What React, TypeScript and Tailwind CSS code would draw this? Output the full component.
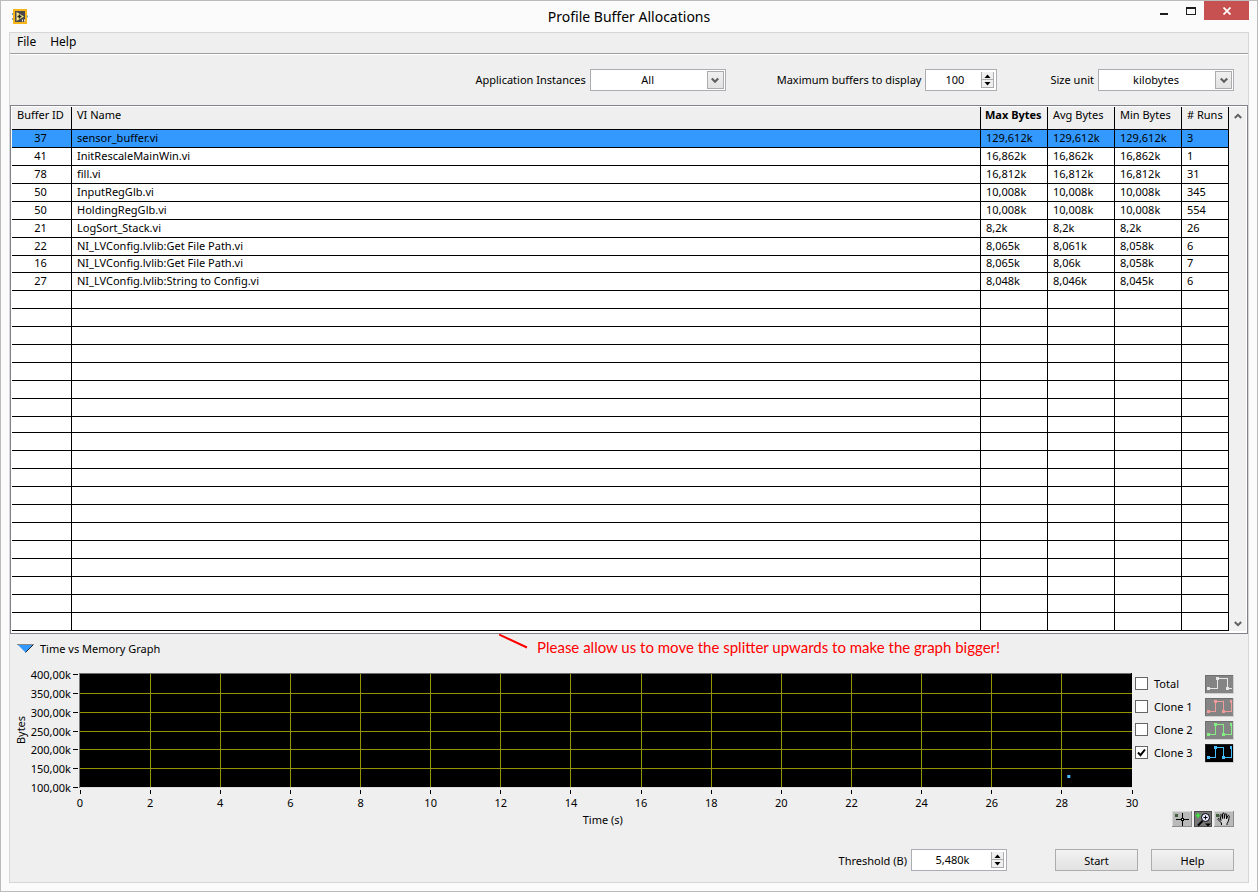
import { useState } from "react";

type Row = {
  id: string;
  name: string;
  max: string;
  avg: string;
  min: string;
  runs: string;
};

const rows: Row[] = [
  { id: "37", name: "sensor_buffer.vi", max: "129,612k", avg: "129,612k", min: "129,612k", runs: "3" },
  { id: "41", name: "InitRescaleMainWin.vi", max: "16,862k", avg: "16,862k", min: "16,862k", runs: "1" },
  { id: "78", name: "fill.vi", max: "16,812k", avg: "16,812k", min: "16,812k", runs: "31" },
  { id: "50", name: "InputRegGlb.vi", max: "10,008k", avg: "10,008k", min: "10,008k", runs: "345" },
  { id: "50", name: "HoldingRegGlb.vi", max: "10,008k", avg: "10,008k", min: "10,008k", runs: "554" },
  { id: "21", name: "LogSort_Stack.vi", max: "8,2k", avg: "8,2k", min: "8,2k", runs: "26" },
  { id: "22", name: "NI_LVConfig.lvlib:Get File Path.vi", max: "8,065k", avg: "8,061k", min: "8,058k", runs: "6" },
  { id: "16", name: "NI_LVConfig.lvlib:Get File Path.vi", max: "8,065k", avg: "8,06k", min: "8,058k", runs: "7" },
  { id: "27", name: "NI_LVConfig.lvlib:String to Config.vi", max: "8,048k", avg: "8,046k", min: "8,045k", runs: "6" },
];

const emptyRows = Array.from({ length: 19 }, (_, i) => i);

const yTicks = [
  { label: "400,00k", y: 1 },
  { label: "350,00k", y: 20 },
  { label: "300,00k", y: 39 },
  { label: "250,00k", y: 58 },
  { label: "200,00k", y: 76 },
  { label: "150,00k", y: 95 },
  { label: "100,00k", y: 114 },
];
const xTicks = Array.from({ length: 16 }, (_, i) => i * 2);

const plots = [
  { name: "Total", color: "#e6e6e6" },
  { name: "Clone 1", color: "#f09a9a" },
  { name: "Clone 2", color: "#84f084" },
  { name: "Clone 3", color: "#46beff" },
];

function AppIcon() {
  return (
    <svg width="16" height="15" viewBox="0 0 16 15" aria-hidden="true">
      <path d="M0 5h3M0 10h3M13 7.500h3" stroke="#6fa3c4" strokeWidth="2" />
      <rect x="2" y="1" width="12" height="13" fill="#4a4a4a" stroke="#f6b619" strokeWidth="2" />
      <path d="M4.500 3v9l7.500-4.500z" fill="#ffe98a" />
      <path d="M5.500 7.500h4M7.500 5.500v4" stroke="#222" strokeWidth="1.500" />
      <path d="M10 11.500h3" stroke="#eee" strokeDasharray="1 1" strokeWidth="2" />
    </svg>
  );
}

function TitleBar() {
  return (
    <header className="relative flex h-8 items-start justify-between pl-[11px] pr-2">
      <div className="pt-2">
        <AppIcon />
      </div>
      <h1 className="pointer-events-none absolute inset-x-0 top-1.5 text-center text-[14px] leading-5 font-normal">
        Profile Buffer Allocations
      </h1>
      <div className="flex h-[19px]">
        <button type="button" aria-label="Minimize" className="flex w-[26px] items-center justify-center">
          <svg width="8" height="9" viewBox="0 0 8 9" shapeRendering="crispEdges">
            <rect y="7" width="8" height="2" fill="#1e1e1e" />
          </svg>
        </button>
        <button type="button" aria-label="Maximize" className="flex w-[27px] items-center justify-center">
          <svg width="10" height="8" viewBox="0 0 10 8" shapeRendering="crispEdges">
            <path d="M0 0h10v8h-10zM1 2v5h8v-5z" fill="#1e1e1e" fillRule="evenodd" />
          </svg>
        </button>
        <button type="button" aria-label="Close" className="flex w-[45px] items-center justify-center bg-[#c75050]">
          <svg width="8" height="8" viewBox="0 0 8 8">
            <path d="M0.500 0.500l7 7M7.500 0.500l-7 7" stroke="#fff" strokeWidth="1.700" />
          </svg>
        </button>
      </div>
    </header>
  );
}

function SelectBox({ id, options }: { id: string; options: string[] }) {
  return (
    <div className="relative">
      <select
        id={id}
        className="block h-[22px] w-[136px] appearance-none border border-[#abadb3] bg-white pr-5 pb-0.5 text-center [text-align-last:center] outline-none"
      >
        {options.map((o) => (
          <option key={o}>{o}</option>
        ))}
      </select>
      <span className="pointer-events-none absolute top-0.5 right-0.5 flex h-[18px] w-[17px] items-center justify-center border border-[#acacac] bg-linear-to-b from-[#f0f0f0] to-[#e2e2e2]">
        <svg width="8" height="7" viewBox="0 0 8 7">
          <path d="M0.800 1.500L4 4.700L7.200 1.500" fill="none" stroke="#606060" strokeWidth="2.200" />
        </svg>
      </span>
    </div>
  );
}

function NumberBox({ id, value, wide }: { id: string; value: string; wide?: boolean }) {
  return (
    <div className={`flex h-[22px] border border-[#abadb3] bg-white p-0.5 ${wide ? "w-24" : "w-[72px]"}`}>
      <input
        id={id}
        type="text"
        defaultValue={value}
        className="h-4 min-w-0 flex-1 bg-transparent pb-0.5 text-center outline-none"
      />
      <div className="flex w-[13px] flex-col border border-t-0 border-[#acacac] bg-[#f0f0f0]">
        <button type="button" aria-label="Increase" className="flex flex-1 items-center justify-center">
          <svg width="7" height="4" viewBox="0 0 7 4">
            <path d="M0.500 4L3.500 0.500L6.500 4z" fill="#000" />
          </svg>
        </button>
        <button type="button" aria-label="Decrease" className="flex flex-1 items-center justify-center border-t border-[#acacac]">
          <svg width="7" height="4" viewBox="0 0 7 4">
            <path d="M0.500 0L3.500 3.500L6.500 0z" fill="#000" />
          </svg>
        </button>
      </div>
    </div>
  );
}

function BufferTable() {
  const [selected, setSelected] = useState(0);
  const th = "h-[23px] border-r border-b border-black bg-[#efefef] pl-[5px] align-top text-left font-normal leading-[15px]";
  const td = "border-r border-b border-black pl-[5px] pb-0.5 leading-[14px]";

  return (
    <div className="flex border border-[#82828c] bg-white px-px pt-px pb-0.5">
      <table className="w-full flex-1 table-fixed border-separate border-spacing-0 whitespace-nowrap">
        <colgroup>
          <col className="w-[60px]" />
          <col />
          <col className="w-[67px]" />
          <col className="w-[67px]" />
          <col className="w-[67px]" />
          <col className="w-[47px]" />
        </colgroup>
        <thead>
          <tr>
            <th className={th}>Buffer ID</th>
            <th className={th}>VI Name</th>
            <th className="h-[23px] border-r border-b border-black bg-[#efefef] pl-1 align-top text-left font-bold leading-[15px]">
              Max Bytes
            </th>
            <th className={th}>Avg Bytes</th>
            <th className={th}>Min Bytes</th>
            <th className={th}># Runs</th>
          </tr>
        </thead>
        <tbody>
          {rows.map((r, i) => (
            <tr
              key={i}
              onClick={() => setSelected(i)}
              className={`${i === 7 ? "h-[17px]" : "h-[18px]"} ${i === selected ? "bg-[#3399ff]" : ""}`}
            >
              <td className="border-r border-b border-black pr-0.5 pb-0.5 text-center leading-[14px]">{r.id}</td>
              <td className={td}>{r.name}</td>
              <td className={td}>{r.max}</td>
              <td className={td}>{r.avg}</td>
              <td className={td}>{r.min}</td>
              <td className={td}>{r.runs}</td>
            </tr>
          ))}
          {emptyRows.map((i) => (
            <tr key={i} className={i === 7 ? "h-[16px]" : "h-[18px]"}>
              <td className={td}></td>
              <td className={td}></td>
              <td className={td}></td>
              <td className={td}></td>
              <td className={td}></td>
              <td className={td}></td>
            </tr>
          ))}
        </tbody>
      </table>
      <div className="flex w-[17px] flex-col justify-between bg-[#f0f0f0] pt-[3px] pb-px">
        <button type="button" aria-label="Scroll up" className="flex h-3 items-center justify-center">
          <svg width="8" height="6" viewBox="0 0 8 6">
            <path d="M0.800 5L4 1.800L7.200 5" fill="none" stroke="#606060" strokeWidth="2" />
          </svg>
        </button>
        <button type="button" aria-label="Scroll down" className="flex h-3 items-center justify-center">
          <svg width="8" height="6" viewBox="0 0 8 6">
            <path d="M0.800 1L4 4.200L7.200 1" fill="none" stroke="#606060" strokeWidth="2" />
          </svg>
        </button>
      </div>
    </div>
  );
}

function Graph() {
  return (
    <div className="min-w-0 flex-1 pl-[70px]">
      <svg className="block h-[154px] w-full overflow-visible" role="img" aria-label="Bytes over time">
        <rect width="100%" height="114" fill="#000" />
        {yTicks.slice(1, 6).map((t) => (
          <rect key={t.y} width="100%" y={t.y} height="1" fill="#949400" />
        ))}
        {xTicks.slice(1, 15).map((x) => (
          <line
            key={x}
            x1={`${(x / 30) * 100}%`}
            x2={`${(x / 30) * 100}%`}
            y1="1"
            y2="114"
            stroke="#949400"
            shapeRendering="crispEdges"
          />
        ))}
        <rect x="-1" width="1" height="115" fill="#7a7a7a" />
        <rect x="-1" width="100%" height="1" fill="#6e6e6e" />
        <rect y="114" width="100%" height="1" fill="#dcdcdc" />
        <rect x="93.850%" y="102" width="3" height="3" fill="#46beff" />
        {yTicks.map((t) => (
          <g key={t.label}>
            <rect x="-7" y={t.y} width="5" height="1" fill="#000" />
            <text x="-9" y={t.y + 5} textAnchor="end">
              {t.label}
            </text>
          </g>
        ))}
        {xTicks.map((x) => (
          <g key={x}>
            <line
              x1={`${(x / 30) * 100}%`}
              x2={`${(x / 30) * 100}%`}
              y1="117"
              y2="121"
              stroke="#000"
              shapeRendering="crispEdges"
            />
            <text x={`${(x / 30) * 100}%`} y="134" textAnchor="middle">
              {x}
            </text>
          </g>
        ))}
        <text x="49.700%" y="151" textAnchor="middle">
          Time (s)
        </text>
        <text transform="translate(-55 57) rotate(-90)" textAnchor="middle">
          Bytes
        </text>
      </svg>
    </div>
  );
}

function PlotSample({ index, color, on }: { index: number; color: string; on: boolean }) {
  return (
    <svg width="29" height="19" viewBox="0 0 29 19" shapeRendering="crispEdges" aria-hidden="true">
      <rect width="29" height="19" fill="#cfcfcf" />
      <rect width="28" height="18" fill={on ? "#222" : "#6f6f6f"} />
      <rect x="1" y="1" width="27" height="17" fill={on ? "#000" : "#848484"} />
      {index === 0 ? (
        <g fill={color}>
          <path d="M3 13h10v1h-10zM12 3h1v11h-1zM12 3h11v1h-11zM22 3h1v11h-1zM22 13h5v1h-5z" />
          <path d="M2 12h3v3h-3zM11 2h3v3h-3zM21 12h3v3h-3z" />
        </g>
      ) : (
        <g fill={color}>
          <path d="M3 13h8v1h-8zM10 3h1v11h-1zM10 3h9v1h-9zM18 3h1v11h-1zM18 13h9v1h-9zM26 3h1v11h-1z" />
          <path d="M2 12h3v3h-3zM9 2h3v3h-3zM17 12h3v3h-3zM25 2h2v3h-2z" />
        </g>
      )}
    </svg>
  );
}

function Legend() {
  const [visible, setVisible] = useState([false, false, false, true]);
  const toggle = (i: number) => setVisible(visible.map((v, n) => (n === i ? !v : v)));

  return (
    <div>
      {plots.map((p, i) => (
        <div key={p.name} className="flex h-[23px] items-center justify-between">
          <label className="flex items-center gap-1.5 pb-0.5">
            <span className="relative size-[13px]">
              <input
                type="checkbox"
                checked={visible[i]}
                onChange={() => toggle(i)}
                className="peer block size-[13px] appearance-none border border-[#666] bg-white"
              />
              <svg
                className="pointer-events-none absolute inset-0 hidden peer-checked:block"
                width="13"
                height="13"
                viewBox="0 0 13 13"
              >
                <path d="M3 6.500L5.500 9.200L10 3.500" fill="none" stroke="#000" strokeWidth="2" />
              </svg>
            </span>
            {p.name}
          </label>
          <PlotSample index={i} color={p.color} on={visible[i]} />
        </div>
      ))}
    </div>
  );
}

function GraphPalette() {
  return (
    <div className="flex justify-end gap-0.5">
      <button type="button" aria-label="Cursor movement tool">
        <svg className="block" width="20" height="16" viewBox="0 0 20 16" shapeRendering="crispEdges">
          <rect width="20" height="16" fill="#8c8c8c" />
          <rect width="19" height="15" fill="#d8d8d8" />
          <rect x="1" y="1" width="18" height="14" fill="#b9b9b9" />
          <rect x="3" y="3" width="3" height="3" fill="#3f5f3a" />
          <path d="M4 8h13v1h-13zM10 2h1v13h-1zM9 7h3v3h-3z" fill="#000" />
          <rect x="10" y="8" width="1" height="1" fill="#fff" />
        </svg>
      </button>
      <button type="button" aria-label="Zoom">
        <svg className="block" width="18" height="16" viewBox="0 0 18 16">
          <rect width="18" height="16" fill="#4b4b4b" />
          <rect x="1" y="1" width="16" height="14" fill="#777" />
          <path d="M1.500 4.500h5M4 2v5" stroke="#3ee43e" strokeWidth="1.500" />
          <path d="M8.500 10L4 14.500" stroke="#000" strokeWidth="2" />
          <circle cx="11.500" cy="6.500" r="4" fill="#e8e8ff" stroke="#000" />
          <path d="M9.500 6.500h4M11.500 4.500v4" stroke="#000" />
          <path d="M11 12.500h6l-3 3z" fill="#000" />
        </svg>
      </button>
      <button type="button" aria-label="Pan">
        <svg className="block" width="20" height="16" viewBox="0 0 20 16">
          <rect width="20" height="16" fill="#8c8c8c" />
          <rect width="19" height="15" fill="#d8d8d8" />
          <rect x="1" y="1" width="18" height="14" fill="#b9b9b9" />
          <rect x="2" y="3" width="3" height="3" fill="#3f5f3a" />
          <path
            d="M7.500 14V12L4 8.500C3.500 7.500 5 7 5.500 8L7 9.500L6 4.500C6 3.200 7.500 3.200 7.800 4.500L8.500 7.500V3C8.700 1.800 10.200 1.800 10.300 3V7.500L11 3.500C11.300 2.300 12.700 2.500 12.700 3.700L12.500 8L13.700 5C14.200 4 15.500 4.500 15.200 5.700C14.800 8 14.800 10 13 12.500V14"
            fill="#d4d4d4"
            stroke="#000"
          />
        </svg>
      </button>
    </div>
  );
}

export default function App() {
  const button = "h-[22px] w-[83px] border border-[#acacac] bg-linear-to-b from-[#f2f2f2] to-[#e2e2e2]";

  return (
    <div className="flex min-h-screen flex-col border border-[#bbbbbb] bg-[#fbfbfb] font-['Noto_Sans',sans-serif] text-[11px] leading-[15px] text-black">
      <TitleBar />
      <main className="mx-2 -mt-px mb-2 flex flex-1 flex-col border border-[#d6d6d6] bg-[#efefef]">
        <nav className="flex h-[21px] items-center gap-3.5 border-b border-[#9d9d9d] pb-1 pl-[7px] text-[12px]">
          <button type="button">File</button>
          <button type="button">Help</button>
        </nav>
        <div className="flex h-[51px] items-center justify-end border-t border-white pr-3.5">
          <label htmlFor="instances" className="pr-1 pb-0.5">
            Application Instances
          </label>
          <SelectBox id="instances" options={["All", "Main Application Instance"]} />
          <label htmlFor="max-buffers" className="pr-1 pb-0.5 pl-[51px]">
            Maximum buffers to display
          </label>
          <NumberBox id="max-buffers" value="100" />
          <label htmlFor="size-unit" className="pr-1 pb-0.5 pl-[53px]">
            Size unit
          </label>
          <SelectBox id="size-unit" options={["kilobytes", "bytes", "megabytes"]} />
        </div>

        <BufferTable />

        <div className="relative flex h-[39px] items-start pt-[7px] pl-[7px]">
          <button type="button" className="flex items-center gap-1.5">
            <svg width="17" height="10" viewBox="0 0 17 10">
              <path d="M0.500 0.500h16l-8 8z" fill="#3399ff" />
              <path d="M16.500 0.500l-8 8" stroke="#222" />
              <path d="M0 0.500h17" stroke="#888" />
            </svg>
            Time vs Memory Graph
          </button>
          <div className="pointer-events-none absolute top-0 left-[489px] flex gap-2 text-[#ff0000]">
            <svg width="30" height="16" viewBox="0 0 30 16">
              <path d="M0 0.500L28 13.500" stroke="#ff0000" strokeWidth="2" />
            </svg>
            <p className="pt-[3px] font-[Lato,sans-serif] text-[15px] leading-5 whitespace-nowrap">
              Please allow us to move the splitter upwards to make the graph bigger!
            </p>
          </div>
        </div>

        <div className="flex pr-3.5">
          <Graph />
          <div className="ml-[3px] flex w-[99px] flex-col justify-between">
            <Legend />
            <GraphPalette />
          </div>
        </div>

        <div className="flex items-center justify-end pt-[22px] pr-3.5 pb-[11px]">
          <label htmlFor="threshold" className="pr-1">
            Threshold (B)
          </label>
          <NumberBox id="threshold" value="5,480k" wide />
          <button type="button" className={`${button} mr-[13px] ml-12`}>
            Start
          </button>
          <button type="button" className={button}>
            Help
          </button>
        </div>
      </main>
    </div>
  );
}
